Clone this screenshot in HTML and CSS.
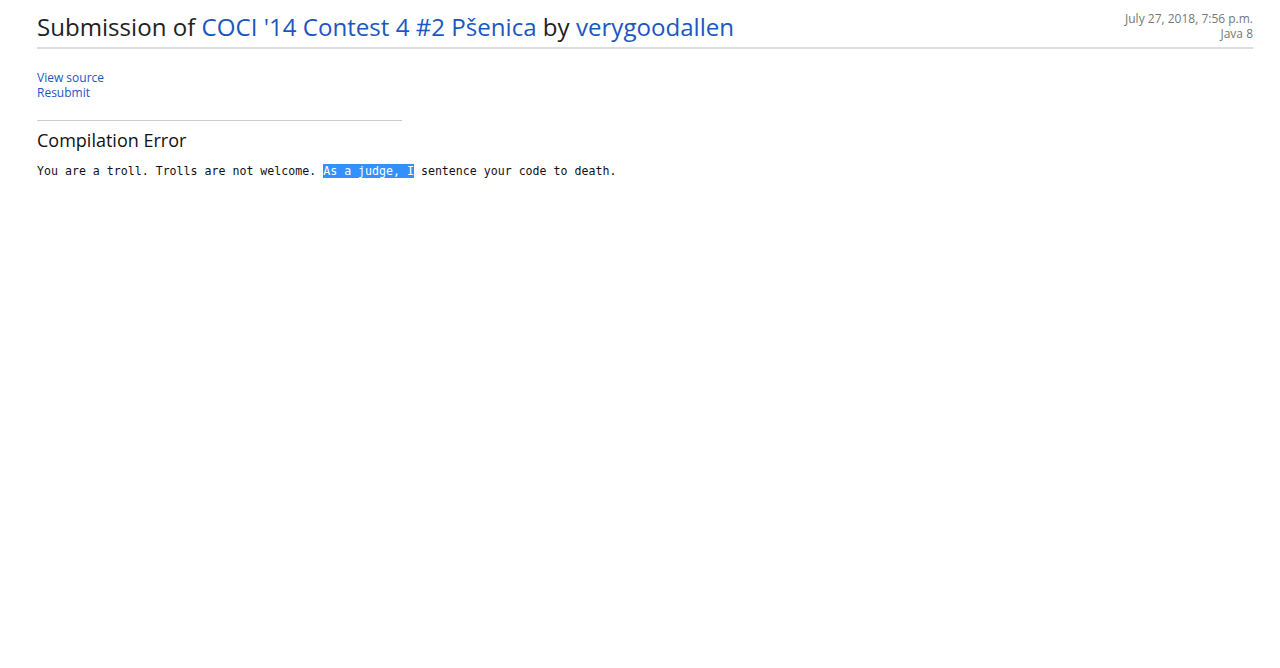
FILE: index.html
```html
<!DOCTYPE html>
<html lang="en">
<head>
    <meta charset="UTF-8">
    <title>Submission</title>
    <link rel="stylesheet" href="styles.css">
</head>
<body>
    <div class="page">
        <div class="header">
            <h2 class="title">Submission of <a href="#">COCI '14 Contest 4 #2 Pšenica</a> by <a href="#">verygoodallen</a></h2>
            <div class="info">
                <div>July 27, 2018, 7:56 p.m.</div>
                <div>Java 8</div>
            </div>
        </div>
        <div class="actions">
            <div><a href="#">View source</a></div>
            <div><a href="#">Resubmit</a></div>
        </div>
        <hr class="divider">
        <h3 class="error-title">Compilation Error</h3>
        <pre class="error">You are a troll. Trolls are not welcome. <span class="sel">As a judge, I</span> sentence your code to death.</pre>
    </div>
</body>
</html>
```

FILE: styles.css
```css
*{
    margin: 0;
    padding: 0;
    box-sizing: border-box;
}
body{
    font-family: "Open Sans", sans-serif;
    color: #222;
    background: #fff;
}
a{
    color: #1b57c1;
    text-decoration: none;
}
.page{
    padding: 0 27px 0 37px;
}
.header{
    display: flex;
    justify-content: space-between;
    align-items: flex-start;
    border-bottom: 2px solid #ddd;
    height: 49px;
}
.title{
    font-size: 24.1px;
    font-weight: 400;
    line-height: 32px;
    padding-top: 11px;
    color: #222;
}
.info{
    text-align: right;
    font-size: 12px;
    line-height: 15px;
    color: #777;
    padding-top: 11px;
}
.actions{
    margin-top: 21px;
    font-size: 12px;
    line-height: 15px;
}
.divider{
    border: none;
    border-top: 1px solid #ccc;
    width: 365px;
    margin-top: 20px;
}
.error-title{
    font-size: 18px;
    font-weight: 400;
    line-height: 24px;
    margin-top: 7px;
    color: #111;
}
.error{
    font-family: "DejaVu Sans Mono", monospace;
    font-size: 11.6px;
    line-height: 16px;
    margin-top: 11px;
    color: #111;
}
.sel{
    background: #3390ff;
    color: #fff;
}
```
